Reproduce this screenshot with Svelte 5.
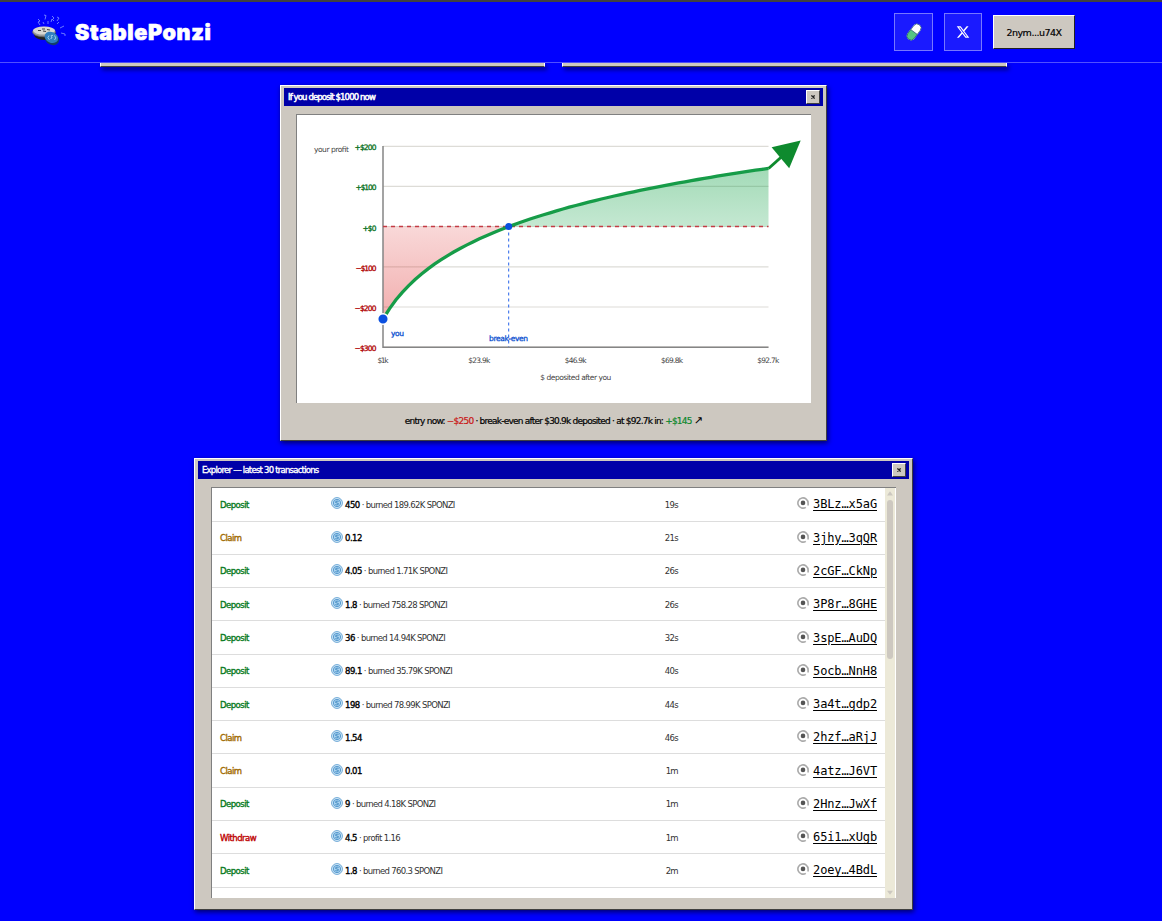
<script lang="ts">
	interface Transaction {
		type: 'Deposit' | 'Claim' | 'Withdraw';
		amount: string;
		note?: string;
		age: string;
		signature: string;
	}

	const transactions: Transaction[] = [
		{ type: 'Deposit', amount: '450', note: 'burned 189.62K SPONZI', age: '19s', signature: '3BLz…x5aG' },
		{ type: 'Claim', amount: '0.12', age: '21s', signature: '3jhy…3qQR' },
		{ type: 'Deposit', amount: '4.05', note: 'burned 1.71K SPONZI', age: '26s', signature: '2cGF…CkNp' },
		{ type: 'Deposit', amount: '1.8', note: 'burned 758.28 SPONZI', age: '26s', signature: '3P8r…8GHE' },
		{ type: 'Deposit', amount: '36', note: 'burned 14.94K SPONZI', age: '32s', signature: '3spE…AuDQ' },
		{ type: 'Deposit', amount: '89.1', note: 'burned 35.79K SPONZI', age: '40s', signature: '5ocb…NnH8' },
		{ type: 'Deposit', amount: '198', note: 'burned 78.99K SPONZI', age: '44s', signature: '3a4t…gdp2' },
		{ type: 'Claim', amount: '1.54', age: '46s', signature: '2hzf…aRjJ' },
		{ type: 'Claim', amount: '0.01', age: '1m', signature: '4atz…J6VT' },
		{ type: 'Deposit', amount: '9', note: 'burned 4.18K SPONZI', age: '1m', signature: '2Hnz…JwXf' },
		{ type: 'Withdraw', amount: '4.5', note: 'profit 1.16', age: '1m', signature: '65i1…xUgb' },
		{ type: 'Deposit', amount: '1.8', note: 'burned 760.3 SPONZI', age: '2m', signature: '2oey…4BdL' }
	];

	const LEFT = 86;
	const RIGHT = 471.5;
	const ZERO = 111.5;
	const BREAK_EVEN = 211.7;

	const yTicks = [
		{ label: '+$200', y: 31.3, width: 22 },
		{ label: '+$100', y: 71.4, width: 21 },
		{ label: '+$0', y: 111.5, width: 14 },
		{ label: '−$100', y: 151.8, width: 21 },
		{ label: '−$200', y: 192, width: 22 },
		{ label: '−$300', y: 232.2, width: 22 }
	];

	const xTicks = [
		{ label: '$1k', x: 86, width: 11 },
		{ label: '$23.9k', x: 182.3, width: 22 },
		{ label: '$46.9k', x: 278.7, width: 22 },
		{ label: '$69.8k', x: 375, width: 22 },
		{ label: '$92.7k', x: 471.3, width: 22 }
	];

	function profitY(x: number) {
		return 204 - 60.6 * Math.log(1 + (x - LEFT) / 35);
	}

	function curve(from: number, to: number) {
		const steps = 60;
		return Array.from({ length: steps + 1 }, (_, i) => {
			const x = from + ((to - from) * i) / steps;
			return `${x.toFixed(1)},${profitY(x).toFixed(1)}`;
		}).join(' L');
	}

	const linePath = `M${curve(LEFT, RIGHT)}`;
	const lossPath = `M${LEFT},${ZERO} L${curve(LEFT, BREAK_EVEN)} Z`;
	const gainPath = `M${curve(BREAK_EVEN, RIGHT)} L${RIGHT},${ZERO} Z`;
</script>

{#snippet titlebar(title: string)}
	<div class="titlebar">
		<span>{title}</span>
		<button class="close" aria-label="Close">
			<svg viewBox="0 0 5 5"><path d="M.5 .5 4.5 4.5M4.5 .5.5 4.5" /></svg>
		</button>
	</div>
{/snippet}

<div class="page">
	<header>
		<div class="bar">
			<div class="brand">
				<svg class="logo" viewBox="0 0 36 32">
					<ellipse cx="13" cy="20.5" rx="11" ry="5.5" fill="#222" />
					<ellipse cx="12" cy="18" rx="11.5" ry="4.8" fill="#999" stroke="#666" stroke-width=".7" />
					<ellipse cx="12" cy="16.6" rx="11" ry="4" fill="#d8d8d2" />
					<path d="M6 16.5h3m2 .5 3 .5m1-2 3 .5M10 15h3" stroke="#444" stroke-width="1.2" />
					<ellipse cx="20.5" cy="25" rx="7.2" ry="5.8" transform="rotate(25 20 24)" fill="#123f6a" />
					<ellipse cx="20" cy="23.5" rx="7" ry="5.3" transform="rotate(25 20 22)" fill="#3180c0" />
					<path
						d="M17 21.5q-2.5 2 .5 4.5m5-4.5q2.5 2.5 0 4.5m-1.5-4.5q-3-.5-1.5 1.2t-1 1.8"
						fill="none"
						stroke="#b5ddf7"
						stroke-width=".8"
					/>
					<path
						d="m6 5 2 2-2 1 2 3M12 1l2 .5-1 4M19 8l1-3 2 2M20 2l2 2-1 1M25 3l2 1-2 3M25 10l2-2M28 14l4-2M29 19l4 1v2M11 8l1 2M16 7v3"
						fill="none"
						stroke="#8798ff"
						stroke-width=".8"
					/>
				</svg>
				<span>StablePonzi</span>
			</div>
			<nav>
				<button class="icon-btn" aria-label="Pump">
					<svg width="18" height="20" viewBox="0 0 18 20">
						<g transform="rotate(37 9 10)">
							<rect x="4.7" y="0.8" width="8.6" height="18.4" rx="4.3" fill="#fff" />
							<path d="M4.7 10h8.6v4.9a4.3 4.3 0 0 1-8.6 0z" fill="#56c583" />
							<path
								d="M4.7 10h8.6M5 5v10a4 4 0 0 0 8 0V5a4 4 0 0 0-8 0z"
								fill="none"
								stroke="#285a78"
								stroke-width=".7"
							/>
						</g>
					</svg>
				</button>
				<button class="icon-btn x-btn" aria-label="X">
					<svg width="14" height="14" viewBox="0 0 24 24" fill="#fff">
						<path
							d="M18.24 2.25h3.31l-7.23 8.26 8.5 11.24h-6.66l-5.21-6.82-5.97 6.82H1.67l7.73-8.84L1.25 2.25h6.83l4.71 6.23zm-1.16 17.52h1.83L7.08 4.13H5.12z"
						/>
					</svg>
				</button>
				<button class="wallet">2nym...u74X</button>
			</nav>
		</div>
	</header>

	<main>
		<div class="stats">
			<div class="stub"></div>
			<div class="stub"></div>
		</div>

		<section class="window chart-window">
			{@render titlebar('If you deposit $1000 now')}
			<div class="chart">
				<svg viewBox="0 0 514 288">
					<defs>
						<linearGradient id="loss" x1="0" y1="0" x2="0" y2="1">
							<stop offset="0" stop-color="#dc2828" stop-opacity=".18" />
							<stop offset="1" stop-color="#dc2828" stop-opacity=".38" />
						</linearGradient>
						<linearGradient id="gain" x1="0" y1="0" x2="0" y2="1">
							<stop offset="0" stop-color="#16a34a" stop-opacity=".4" />
							<stop offset="1" stop-color="#16a34a" stop-opacity=".25" />
						</linearGradient>
					</defs>

					{#each yTicks as tick, i}
						<line x1={LEFT} x2={RIGHT} y1={tick.y} y2={tick.y} class="grid" />
						<text
							x="79.5"
							y={tick.y + 4}
							textLength={tick.width}
							text-anchor="end"
							class="y-label"
							class:negative={i > 2}>{tick.label}</text
						>
					{/each}

					<path d={lossPath} fill="url(#loss)" />
					<path d={gainPath} fill="url(#gain)" />
					<path d="M86 31V232.3H471.5" class="axis" />
					<line x1={LEFT} x2={RIGHT} y1={ZERO} y2={ZERO} class="zero" />
					<line x1={BREAK_EVEN} x2={BREAK_EVEN} y1={ZERO} y2="232" class="marker" />
					<path d={linePath} class="curve" />
					<path d="M471.5 53.5 490 37" class="arrow-stem" />
					<path d="M474.6 32.3 503.7 25.4 492.2 53.2Z" fill="#0e8a2e" />
					<circle cx={BREAK_EVEN} cy={ZERO} r="3.5" fill="#0b50e0" />
					<circle cx={LEFT} cy="204" r="5.3" fill="#0b50e0" stroke="#fff" stroke-width="1.5" />

					<text x="17" y="37.3" textLength="35" class="muted">your profit</text>
					<text x="94" y="221" textLength="13" class="blue">you</text>
					<text x="192" y="226" textLength="39" class="blue">break-even</text>
					{#each xTicks as tick}
						<text x={tick.x} y="248" textLength={tick.width} text-anchor="middle" class="muted">{tick.label}</text>
					{/each}
					<text x="278.8" y="265" textLength="71" text-anchor="middle" class="muted">$ deposited after you</text>
				</svg>
			</div>
			<p class="summary">
				entry now: <span class="loss">−$250</span> · break-even after $30.9k deposited · at $92.7k in:
				<span class="gain">+$145</span> <span class="ne">↗</span>
			</p>
		</section>

		<section class="window explorer">
			{@render titlebar('Explorer — latest 30 transactions')}
			<div class="list">
				<div class="rows">
					{#each transactions as tx}
						<div class="row">
							<span class="type {tx.type.toLowerCase()}">{tx.type}</span>
							<span class="amount">
								<svg class="coin" viewBox="0 0 12 12">
									<circle cx="6" cy="6" r="5.4" fill="#dceefa" stroke="#5b9dd0" stroke-width=".9" />
									<circle cx="6" cy="6" r="3.7" fill="#a9d2f0" stroke="#3f8ac6" stroke-width=".8" />
									<path
										d="M7.5 4.5q-1.5-1-2.7 0t1.2 1.5 1.2 1.5-2.8 0"
										fill="none"
										stroke="#2f7cb8"
										stroke-width=".8"
									/>
								</svg>
								<b>{tx.amount}</b>{#if tx.note}<span class="note">&nbsp;· {tx.note}</span>{/if}
							</span>
							<span class="age">{tx.age}</span>
							<span class="signature">
								<svg width="12" height="12" viewBox="0 0 12 12">
									<path d="M8.8 10.3A5.1 5.1 0 1 1 11.1 6V8.6" fill="none" stroke="#aaa" stroke-width="1.6" />
									<circle cx="6" cy="5.9" r="2.3" fill="#555" />
								</svg>
								<a href="#{tx.signature}">{tx.signature}</a>
							</span>
						</div>
					{/each}
				</div>
				<div class="scrollbar">
					<svg viewBox="0 0 8 6"><path d="M4 0 8 5.5H0z" /></svg>
					<div class="thumb"></div>
					<svg viewBox="0 0 8 6"><path d="M0 .5h8L4 6z" /></svg>
				</div>
			</div>
		</section>
	</main>
</div>

<style>
	:global(body) {
		background: #00f;
	}

	.page {
		box-sizing: border-box;
		height: 921px;
		overflow: hidden;
		border-top: 2px solid #404040;
		background: #00f;
		font-family: Tahoma, 'DejaVu Sans', sans-serif;
		color: #000;
	}

	header {
		height: 60px;
		border-bottom: 1px solid #5050ff;
	}

	.bar {
		box-sizing: border-box;
		width: 1107px;
		height: 60px;
		padding: 0 32px;
		display: flex;
		align-items: center;
		justify-content: space-between;
	}

	.brand {
		display: flex;
		align-items: center;
		gap: 7px;
		font: 900 21.5px Inter, sans-serif;
		letter-spacing: 0.65px;
		color: #fff;
		-webkit-text-stroke: 0.6px #fff;
	}

	.logo {
		width: 36px;
		height: 32px;
		margin-top: -4px;
	}

	nav {
		display: flex;
		align-items: center;
		gap: 11px;
	}

	button {
		padding: 0;
		border-radius: 0;
		font-family: inherit;
	}

	.icon-btn {
		display: flex;
		align-items: center;
		justify-content: center;
		width: 39px;
		height: 38px;
		border: 1px solid #7777ff;
		background: #1a1aff;
	}

	.x-btn {
		width: 38px;
	}

	.wallet {
		width: 82px;
		height: 34px;
		border: 1px solid;
		border-color: #fff #222 #222 #fff;
		background: #cdc8c0;
		font-size: 9.5px;
		letter-spacing: -0.5px;
		color: #000;
		-webkit-text-stroke: 0.2px;
	}

	main {
		width: 1107px;
		display: flex;
		flex-direction: column;
		align-items: center;
	}

	.stats {
		display: flex;
		gap: 17px;
		margin-bottom: 18px;
	}

	.stub {
		box-sizing: border-box;
		width: 445px;
		height: 4px;
		border: solid #fff;
		border-width: 0 1px 1px;
		border-bottom-color: #404040;
		background: #cdc8c0;
		box-shadow: 2px 3px 4px rgba(0, 0, 0, 0.5);
	}

	.window {
		box-sizing: border-box;
		border: 1px solid;
		border-color: #fff #404040 #404040 #fff;
		background: #cdc8c0;
		box-shadow: 1px 2px 5px rgba(0, 0, 0, 0.6);
	}

	.chart-window {
		width: 547px;
		height: 356px;
		padding: 2px 3px;
	}

	.explorer {
		width: 719px;
		height: 452px;
		margin-top: 17px;
		padding: 2px 3px;
	}

	.titlebar {
		box-sizing: border-box;
		height: 18px;
		padding: 0 3px 0 4px;
		display: flex;
		align-items: center;
		justify-content: space-between;
		background: #0000a8;
		color: #fff;
		font-size: 8.5px;
		letter-spacing: -0.87px;
		white-space: nowrap;
		-webkit-text-stroke: 0.5px;
	}

	.explorer .titlebar {
		letter-spacing: -0.77px;
		-webkit-text-stroke: 0.35px;
	}

	.close {
		display: flex;
		align-items: center;
		justify-content: center;
		width: 14px;
		height: 14px;
		border: 1px solid;
		border-color: #fff #404040 #404040 #fff;
		background: #cdc8c0;
	}

	.close svg {
		width: 4px;
		height: 4px;
		stroke: #222;
		stroke-width: 1.6;
	}

	.chart {
		width: 514px;
		height: 288px;
		margin: 8px 0 0 12px;
		border: solid #808080;
		border-width: 1px 0 0 1px;
		background: #fff;
	}

	.chart svg {
		display: block;
		width: 514px;
		height: 288px;
	}

	.chart text {
		font-size: 7.5px;
	}

	.grid {
		stroke: #dddcd7;
		stroke-width: 1.2;
	}

	.axis {
		fill: none;
		stroke: #858585;
		stroke-width: 1.5;
	}

	.zero {
		stroke: #c43b43;
		stroke-width: 1.3;
		stroke-dasharray: 4 4;
	}

	.marker {
		stroke: #2563eb;
		stroke-dasharray: 3 3;
	}

	.curve {
		fill: none;
		stroke: #169c48;
		stroke-width: 3.3;
	}

	.arrow-stem {
		stroke: #0e8a2e;
		stroke-width: 3;
	}

	.y-label {
		fill: #087020;
		stroke: #087020;
		stroke-width: 0.3;
	}

	.y-label.negative {
		fill: #b00000;
		stroke: #b00000;
	}

	.muted {
		fill: #444;
	}

	.blue {
		fill: #0b50d0;
		stroke: #0b50d0;
		stroke-width: 0.3;
	}

	.summary {
		margin: 10px 0 0;
		text-align: center;
		font-size: 9px;
		line-height: 15px;
		letter-spacing: -0.78px;
		white-space: nowrap;
		-webkit-text-stroke: 0.2px;
	}

	.loss {
		color: #c91414;
	}

	.gain {
		color: #0b872b;
	}

	.ne {
		font-size: 11px;
		-webkit-text-stroke: 0;
	}

	.list {
		box-sizing: border-box;
		width: 685px;
		height: 411px;
		margin: 8px 0 0 13px;
		display: flex;
		overflow: hidden;
		border: solid #808080;
		border-width: 1px 0 0 1px;
		background: #fff;
	}

	.rows {
		width: 673px;
	}

	.row {
		box-sizing: border-box;
		height: 33.27px;
		padding: 0 8px;
		display: grid;
		grid-template-columns: 111px 250px 97px 1fr;
		align-items: center;
		border-bottom: 1px solid #ddd;
		font-size: 8.5px;
		letter-spacing: -0.66px;
		white-space: nowrap;
	}

	.row:first-child {
		height: 33.6px;
	}

	.type,
	b {
		font-weight: 400;
		letter-spacing: -0.53px;
		-webkit-text-stroke: 0.35px;
	}

	.type,
	b,
	.note,
	.age {
		padding-top: 1px;
	}

	.deposit {
		color: #087a22;
	}

	.claim {
		color: #a06b00;
	}

	.withdraw {
		color: #bd0000;
	}

	.amount {
		display: flex;
		align-items: center;
	}

	.coin {
		width: 12px;
		height: 12px;
		margin: -2px 2px 0 0;
	}

	.note,
	.age {
		color: #333;
	}

	.age {
		text-align: right;
	}

	.signature {
		display: flex;
		align-items: center;
		justify-content: flex-end;
		gap: 4px;
	}

	.signature svg {
		margin-top: -2px;
	}

	.signature a {
		color: #000;
		font: 12px 'DejaVu Sans Mono', monospace;
		letter-spacing: -0.12px;
		text-underline-offset: 2px;
	}

	.scrollbar {
		box-sizing: border-box;
		width: 11px;
		padding: 3px 0;
		display: flex;
		flex-direction: column;
		align-items: center;
		background: #ece9d8;
		border-right: 1px solid #fff;
	}

	.scrollbar svg {
		width: 6px;
		height: 5px;
		fill: #ccc8c0;
	}

	.thumb {
		width: 6px;
		height: 159px;
		margin: 4px 0 auto;
		border-radius: 3px;
		background: #cdc8c0;
	}
</style>
